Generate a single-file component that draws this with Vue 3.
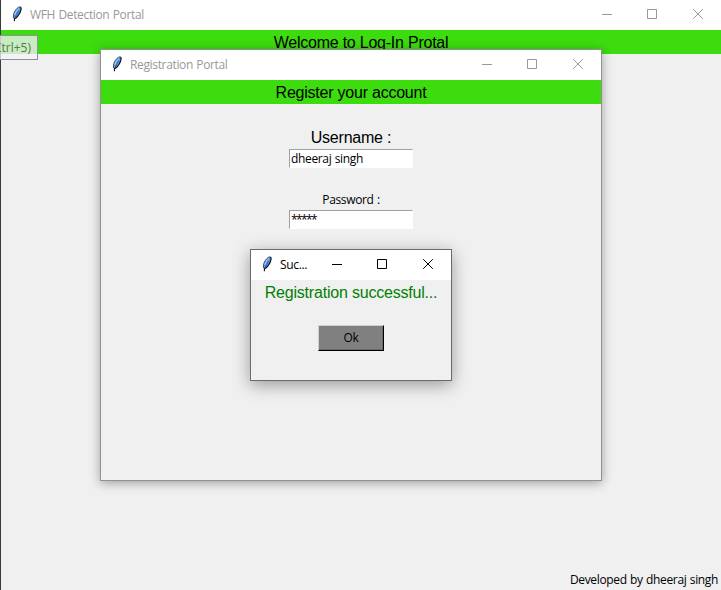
<script setup>
import { h } from 'vue'

const Feather = () =>
  h('svg', { class: 'feather', width: 16, height: 16, viewBox: '0 0 16 16' }, [
    h('path', { d: 'M11.7 .8C8.5 1.2 5.4 4.6 4.6 8.6L4.5 11.8L6.6 12.2C9.5 10 11.5 6.6 12.1 2.6Z', fill: '#5597ea' }),
    h('path', { d: 'M11.4 .6C8.3 1.2 5.2 4.8 4.5 8.8L4.5 12', fill: 'none', stroke: '#2b3038', 'stroke-width': .8 }),
    h('path', { d: 'M10 2.4C8 4 6.6 6 5.9 8.8', fill: 'none', stroke: '#b9dafc', 'stroke-width': 1 }),
    h('path', { d: 'M11.6 1L12.2 2.6C11.6 6.2 9.6 9.8 6.6 12.2L5.4 12.4V15.3', fill: 'none', stroke: '#0c0e12', 'stroke-width': 1.1 }),
    h('path', { d: 'M9.6 5L5.6 12.2', fill: 'none', stroke: '#1e3d70', 'stroke-width': .6 })
  ])

const Controls = () =>
  h('div', { class: 'controls' }, [
    h('svg', { width: 10, height: 10, viewBox: '0 0 10 10' }, [h('path', { d: 'M0 5.5H10' })]),
    h('svg', { width: 10, height: 10, viewBox: '0 0 10 10' }, [h('path', { d: 'M.5 .5H9.5V9.5H.5Z' })]),
    h('svg', { width: 10, height: 10, viewBox: '0 0 10 10' }, [h('path', { d: 'M.2 .2L9.8 9.8M9.8 .2L.2 9.8' })])
  ])
</script>

<template>
  <div class="desktop">
    <section class="window portal">
      <header class="titlebar"><Feather /><span class="title">WFH Detection Portal</span><Controls /></header>
      <div class="banner">Welcome to Log-In Protal</div>
      <footer class="credit">Developed by dheeraj singh</footer>
    </section>

    <div class="tooltip">Ctrl+5)</div>

    <section class="window registration">
      <header class="titlebar"><Feather /><span class="title">Registration Portal</span><Controls /></header>
      <div class="banner">Register your account</div>
      <div class="form">
        <div class="label large">Username :</div>
        <div class="entry">dheeraj singh</div>
        <div class="label small">Password :</div>
        <div class="entry"><span class="mask">*****</span></div>
      </div>
    </section>

    <section class="window dialog">
      <header class="titlebar"><Feather /><span class="title">Suc...</span><Controls /></header>
      <div class="message">Registration successful...</div>
      <button class="ok">Ok</button>
    </section>
  </div>
</template>

<style>
body { overflow: hidden; }
</style>

<style scoped>
.desktop {
  position: relative;
  width: 721px;
  height: 590px;
  overflow: hidden;
  background: #f0f0f0;
  color: #000;
  font: 12px/16px "Open Sans", "Noto Sans", sans-serif;
  letter-spacing: -0.35px;
  word-spacing: 0.6px;
}
.window {
  box-sizing: border-box;
  display: flex;
  flex-direction: column;
  background: #f0f0f0;
}
.portal { height: 590px; border-left: 1px solid #3a3a3c; }
.registration {
  position: absolute;
  left: 100px;
  top: 49px;
  width: 502px;
  height: 432px;
  border: 1px solid #919191;
  box-shadow: 0 2px 10px rgba(0, 0, 0, .34);
}
.dialog {
  position: absolute;
  left: 250px;
  top: 249px;
  width: 202px;
  height: 132px;
  border: 1px solid #6b6b6b;
  align-items: center;
  box-shadow: 0 4px 16px rgba(0, 0, 0, .36);
}
.titlebar {
  box-sizing: border-box;
  display: flex;
  flex: none;
  align-self: stretch;
  height: 30px;
  padding: 0 18px 0 8px;
  background: #fff;
  color: #999;
}
.dialog .titlebar { color: #000; }
.titlebar :deep(.feather) { margin-top: 6px; }
.title { margin: 7px 0 0 5px; white-space: nowrap; }
.titlebar :deep(.controls) {
  display: flex;
  gap: 35px;
  margin: 9px 0 0 auto;
}
.titlebar :deep(.controls svg) { fill: none; stroke: currentColor; stroke-width: 1; }
.titlebar :deep(.controls svg:last-child) { margin-left: 1px; }
.banner {
  flex: none;
  height: 24px;
  background: #3cdc0e;
  font: 16px/26px "Liberation Sans", Arial, sans-serif;
  letter-spacing: -0.23px;
  word-spacing: 0;
  text-align: center;
}
.credit { margin-top: auto; padding: 0 3px 2px 0; text-align: right; }
.tooltip {
  position: absolute;
  left: -11px;
  top: 35px;
  box-sizing: border-box;
  width: 49px;
  height: 25px;
  padding-right: 6px;
  border: 1px solid #8f8f95;
  background: rgba(244, 241, 250, .76);
  color: #567a48;
  line-height: 24px;
  letter-spacing: 0;
  text-align: right;
}
.form { display: flex; flex-direction: column; align-items: center; padding-top: 22px; }
.label.large {
  height: 23px;
  font: 16px/24px "Liberation Sans", Arial, sans-serif;
  letter-spacing: -0.22px;
  word-spacing: 0;
}
.label.small { height: 19px; margin-top: 23px; line-height: 17px; }
.entry {
  box-sizing: border-box;
  width: 124px;
  height: 19px;
  padding-left: 1px;
  border: 1px solid;
  border-color: #a0a0a0 #fff #fff #a0a0a0;
  background: #fff;
  line-height: 17px;
}
.mask { letter-spacing: -1.6px; }
.message {
  color: #008000;
  height: 24px;
  font: 16px/26px "Liberation Sans", Arial, sans-serif;
  letter-spacing: -0.2px;
  word-spacing: 0;
}
.ok {
  box-sizing: border-box;
  width: 66px;
  height: 26px;
  margin: 21px 0 0;
  padding: 0;
  border: 1px solid;
  border-color: #d0d0d0 #000 #000 #d0d0d0;
  box-shadow: inset -1px -1px #696969;
  background: #808080;
  color: #000;
  font: inherit;
  letter-spacing: inherit;
}
</style>
